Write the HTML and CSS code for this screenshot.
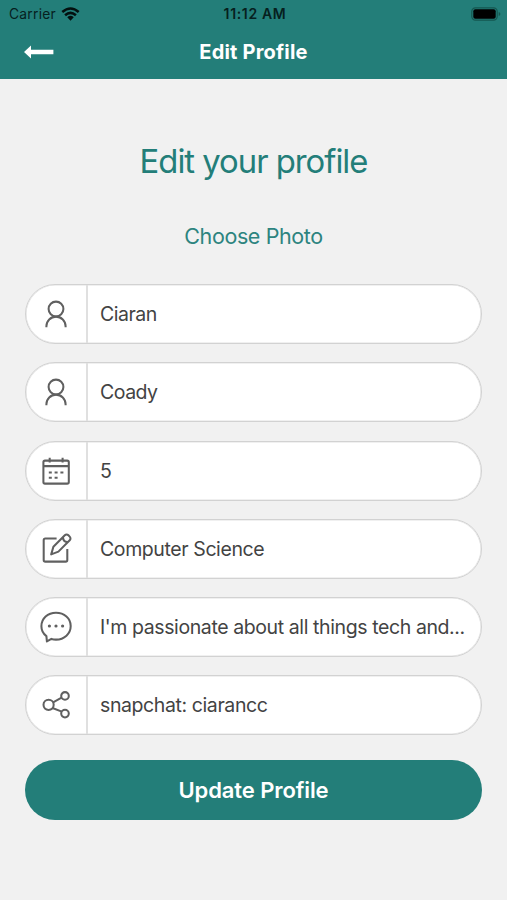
FILE: index.html
```html
<!DOCTYPE html>
<html lang="en">
<head>
<meta charset="utf-8">
<title>Edit Profile</title>
<link rel="stylesheet" href="styles.css">
</head>
<body>
<header class="header">
  <div class="status">
    <div class="carrier"><span>Carrier</span>
      <svg class="wifi" viewBox="0 0 20 15"><g fill="none" stroke="#03100f" stroke-width="2.7"><path d="M1.2 5.4Q10-2.2 18.8 5.4"/><path d="M4.2 8.9Q10 3.8 15.8 8.9"/></g><path fill="#03100f" d="M6.5 11Q10 8 13.5 11L10 14.6Z"/></svg>
    </div>
    <div class="time">11:12 AM</div>
    <div class="power">
      <svg class="battery" viewBox="0 0 30 14"><rect x=".8" y=".8" width="25.4" height="12.4" rx="3.6" fill="none" stroke="#155750" stroke-width="1.2"/><rect x="2.3" y="2.3" width="22.4" height="9.4" rx="2" fill="#000"/><path d="M27.7 5v4q1.7-.7 1.7-2t-1.7-2" fill="#155750"/></svg>
    </div>
  </div>
  <div class="nav">
    <svg class="back" viewBox="0 0 30 14"><path fill="#fff" d="M0 7 7 .5V4.8H29.4V9.2H7v4.3Z"/></svg>
    <h1 class="nav-title">Edit Profile</h1>
    <span></span>
  </div>
</header>
<main class="content">
  <h2 class="title">Edit your profile</h2>
  <a class="choose">Choose Photo</a>
  <div class="fields">
    <div class="field"><div class="icon"><svg viewBox="0 0 36 36"><circle cx="18" cy="13" r="7.4"/><path d="M8.4 31.2v-1a9.6 9.6 0 0 1 19.2 0v1"/></svg></div><div class="value name">Ciaran</div></div>
    <div class="field"><div class="icon"><svg viewBox="0 0 36 36"><circle cx="18" cy="13" r="7.4"/><path d="M8.4 31.2v-1a9.6 9.6 0 0 1 19.2 0v1"/></svg></div><div class="value name">Coady</div></div>
    <div class="field"><div class="icon"><svg viewBox="0 0 36 36"><rect x="5.4" y="7.6" width="25.4" height="23" rx="1.6"/><path d="M5.4 13.1h25.4M11.7 4.8v4.8M24.6 4.8v4.8"/><path d="M10.8 19.4h3M16.6 19.4h3M22.4 19.4h3M10.8 24.7h3M16.6 24.7h3"/></svg></div><div class="value">5</div></div>
    <div class="field"><div class="icon"><svg viewBox="0 0 36 36"><path d="M18.6 7.4H7.3a1.6 1.6 0 0 0-1.6 1.6v20a1.6 1.6 0 0 0 1.6 1.6h20.4a1.6 1.6 0 0 0 1.6-1.6V18"/><path d="m13.2 23.4 2.2-7.6L26.8 4.3a2.5 2.5 0 0 1 3.6 0l1.3 1.3a2.5 2.5 0 0 1 0 3.6L20.4 20.6ZM25 6.6q.3 4.4 4.8 4.6"/></svg></div><div class="value">Computer Science</div></div>
    <div class="field"><div class="icon"><svg viewBox="0 0 36 36"><path d="M8.9 32.4 8.4 27.1C5.2 24.8 3.4 21.2 3.4 17.3 3.4 9.4 9.8 3.8 18 3.8S32.7 9.4 32.7 17 26.3 30.6 18 30.6q-2.3 0-4.6-.7Z"/><g class="dots"><circle cx="11.4" cy="17" r="1.6"/><circle cx="18" cy="17" r="1.6"/><circle cx="24.6" cy="17" r="1.6"/></g></svg></div><div class="value">I'm passionate about all things tech and...</div></div>
    <div class="field"><div class="icon"><svg viewBox="0 0 36 36"><circle cx="10.6" cy="17.8" r="5.1"/><circle cx="27" cy="8.9" r="3.8"/><circle cx="27" cy="26.6" r="3.8"/><path d="m15.1 15.3 8.5-4.6M14.5 21l9.3 3.6"/></svg></div><div class="value">snapchat: ciarancc</div></div>
  </div>
  <button class="update">Update Profile</button>
</main>
</body>
</html>
```

FILE: styles.css
```css
* { box-sizing: border-box; }
body {
  margin: 0;
  min-height: 900px;
  background: #f1f1f1;
  color: #434343;
  font-family: Inter, "Liberation Sans", sans-serif;
}
.header { height: 79px; background: #237e79; }
.status {
  display: grid;
  grid-template-columns: 1fr auto 1fr;
  align-items: center;
  height: 27px;
  padding: 0 6px 0 9px;
  color: #06201e;
  font-size: 13.8px;
}
.carrier { display: flex; align-items: center; gap: 5px; letter-spacing: .25px; }
.wifi { width: 19px; height: 14px; }
.time { font-weight: 600; font-size: 14px; letter-spacing: .65px; }
.power { display: flex; justify-content: flex-end; }
.battery { width: 30px; height: 14px; }
.nav {
  display: grid;
  grid-template-columns: 1fr auto 1fr;
  align-items: center;
  height: 50px;
  padding: 0 24px;
}
.back { width: 30px; height: 14px; }
.nav-title { margin: 0; color: #fff; font-size: 20px; font-weight: 700; line-height: 24px; letter-spacing: .2px; }
.content { display: flex; flex-direction: column; align-items: center; padding: 62px 25px 0; }
.title { margin: 0; color: #237e79; font-size: 32.8px; font-weight: 400; line-height: 40px; letter-spacing: -1px; }
.choose { margin-top: 40px; color: #2d847f; font-size: 21.5px; line-height: 30px; letter-spacing: -.4px; }
.fields { display: flex; flex-direction: column; gap: 18.3px; width: 100%; margin-top: 33px; }
.field {
  display: flex;
  height: 60px;
  overflow: hidden;
  border: 1px solid #d2d2d2;
  border-radius: 30px;
  background: #fff;
  box-shadow: inset 0 0 0 .6px #e2e2e2;
}
.icon {
  display: flex;
  flex: none;
  align-items: center;
  width: 62px;
  padding-left: 12px;
  border-right: 2px solid #e0e0e0;
}
.icon svg { width: 36px; height: 36px; fill: none; stroke: #606060; stroke-width: 2.05; stroke-linejoin: round; }
.icon .dots { fill: #606060; stroke: none; }
.value { padding-left: 12px; font-size: 19.5px; line-height: 58px; letter-spacing: -.4px; white-space: nowrap; }
.value.name { letter-spacing: -.5px; }
.update {
  width: 100%;
  height: 60px;
  margin-top: 24.5px;
  padding: 0;
  border: 0;
  border-radius: 30px;
  background: #237e79;
  color: #fff;
  font: 600 22px/60px Inter, "Liberation Sans", sans-serif;
  letter-spacing: -.1px;
}
```
